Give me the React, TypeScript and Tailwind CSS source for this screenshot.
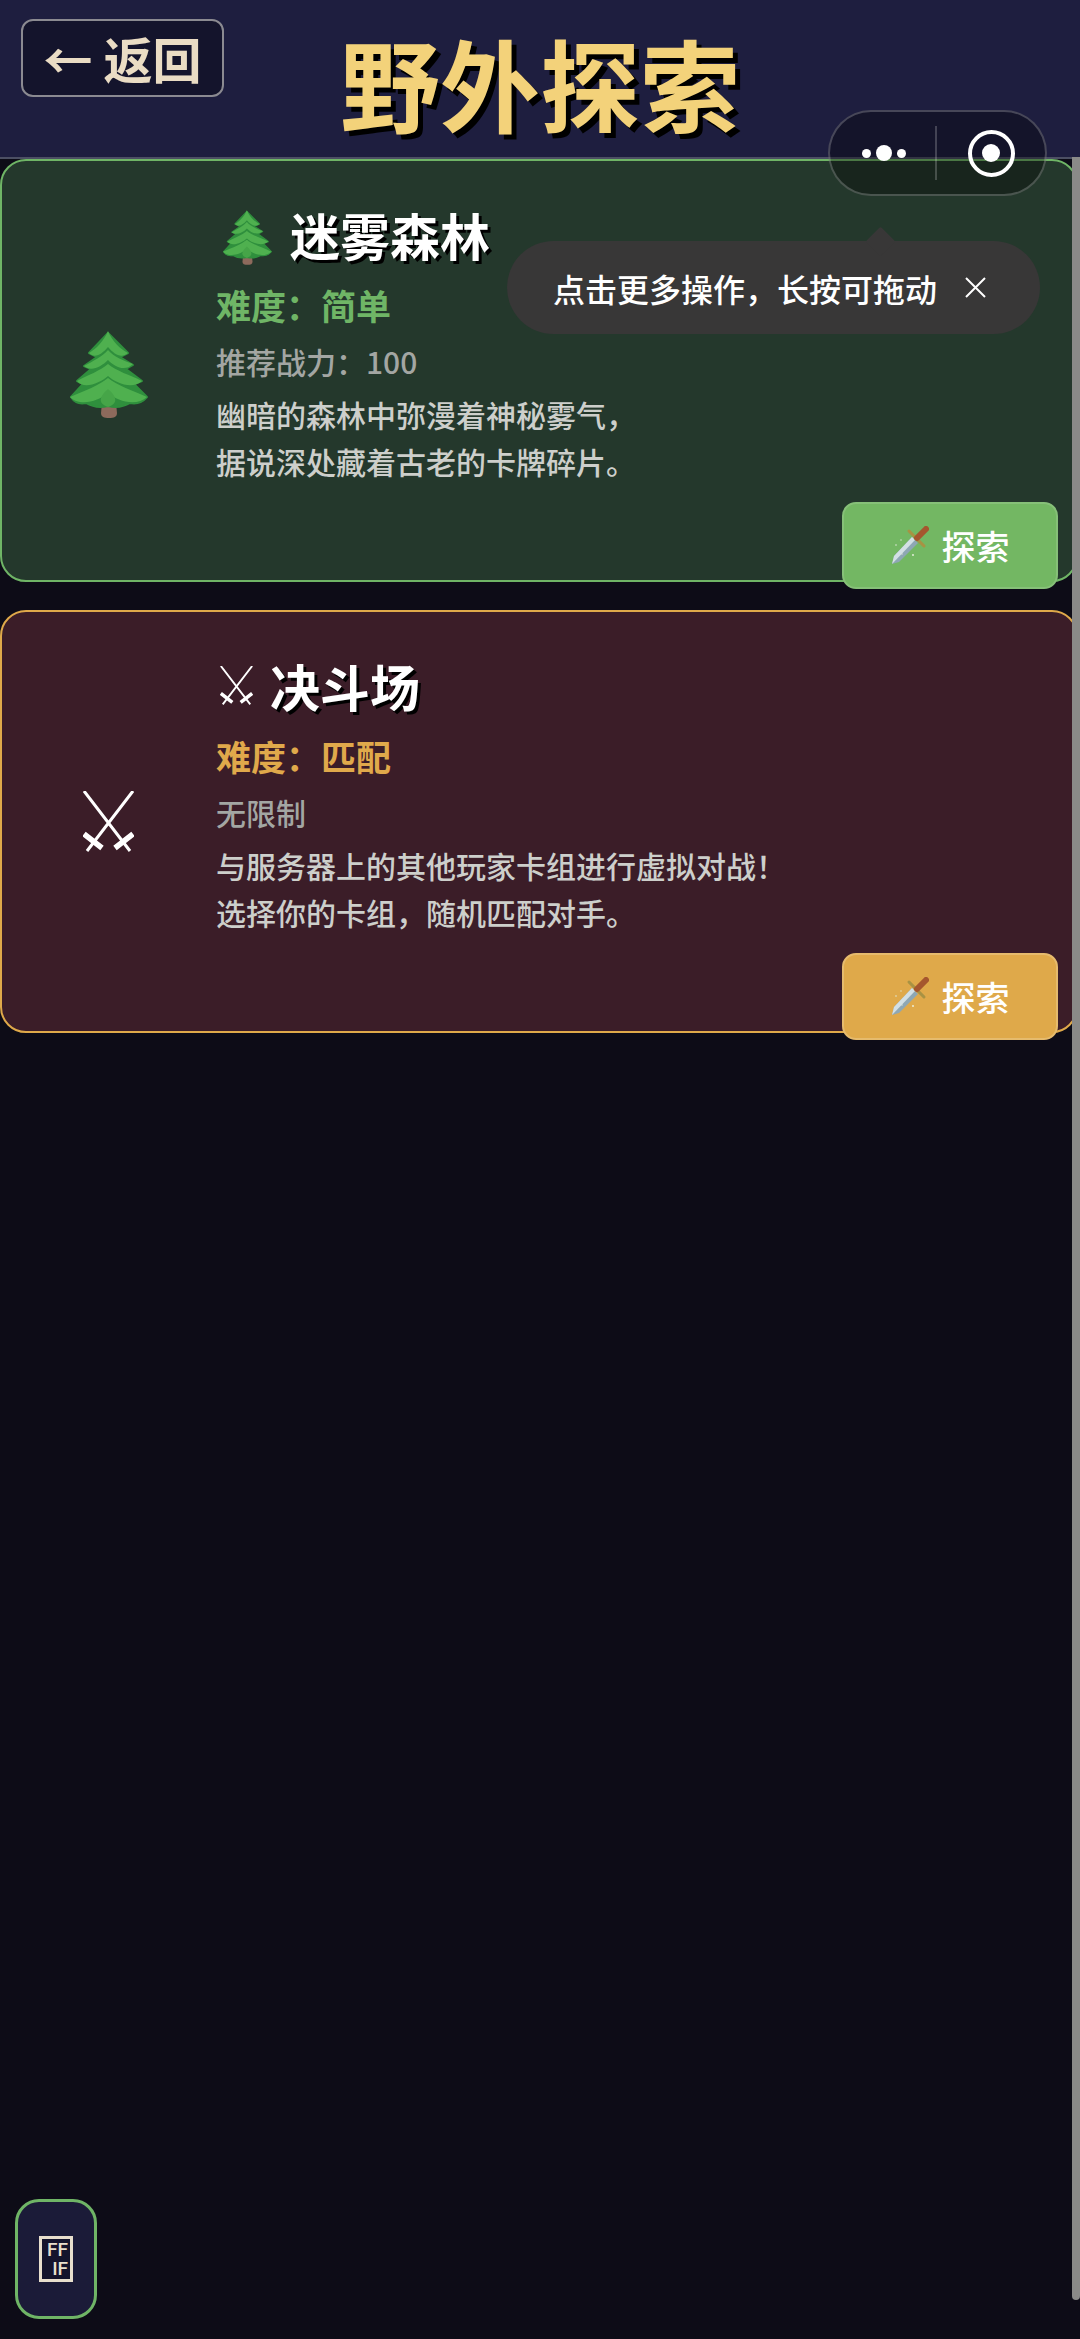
const font = "font-['Noto_Sans_CJK_SC','Noto_Sans',sans-serif]";

function TreeIcon({ width, height }: { width: number; height: number }) {
  return (
    <svg width={width} height={height} viewBox="0 0 78 87" className="shrink-0">
      <path d="M32 72 L46 72 L47 82 C47 86 44 87 39 87 C34 87 31 86 31 82 Z" fill="#8d6a5c" />
      <path
        d="M38 2 L58 22 L50 26 L63 34 L56 38 L72 50 L64 53 L77 66 Q70 74 60 72 Q50 78 38 75 Q26 78 16 72 Q6 74 1 66 L13 53 L7 50 L21 38 L14 35 L27 26 L19 22 Z"
        fill="#2f8f3d"
        stroke="#2f8f3d"
        strokeWidth="2"
        strokeLinejoin="round"
      />
      <path d="M38 0 C42 10 50 18 58 22 C51 28 44 23 38 16 C32 23 25 28 19 22 C26 18 34 10 38 0 Z" fill="#4fb04f" />
      <path d="M38 19 C44 26 54 30 63 33 C55 41 45 36 38 29 C31 36 21 41 14 35 C23 30 32 26 38 19 Z" fill="#4fb04f" />
      <path d="M38 33 C46 40 60 44 72 50 C62 59 46 52 38 45 C30 52 14 59 7 50 C18 44 30 40 38 33 Z" fill="#4fb04f" />
      <path d="M38 47 C46 54 64 60 77 66 C68 75 48 72 38 61 C28 72 8 75 0 66 C14 60 30 54 38 47 Z" fill="#4fb04f" />
      <path d="M38 58 C45 64 50 72 38 76 C26 72 31 64 38 58 Z" fill="#46a548" />
    </svg>
  );
}

function DaggerIcon() {
  return (
    <svg width="38" height="39" viewBox="0 0 38 39" className="shrink-0">
      <path d="M1 38 L3 30 L21 11 L27 17 L8 36 Z" fill="#8ea7b4" />
      <path d="M1 38 L3 30 L21 11 L24 14 Z" fill="#d3e0e5" />
      <path d="M18 5 L33 20" stroke="#a89243" strokeWidth="3" strokeLinecap="round" />
      <path d="M26 12 L35 3" stroke="#a5562e" strokeWidth="6" strokeLinecap="round" />
      <circle cx="5" cy="19" r="0.8" fill="#dfe8d8" />
      <circle cx="10" cy="14" r="0.7" fill="#dfe8d8" />
      <circle cx="22" cy="29" r="0.9" fill="#eef3e4" />
      <circle cx="11" cy="28" r="0.7" fill="#dfe8d8" />
    </svg>
  );
}

function SwordsIcon({ width, height }: { width: number; height: number }) {
  return (
    <svg width={width} height={height} viewBox="0 0 51 61" className="shrink-0" fill="none" stroke="#fff">
      <path d="M1 0 L47 60 M50 0 L4 60" strokeWidth="3" />
      <path d="M32 57 L50 43 M19 57 L1 43" strokeWidth="5.5" />
    </svg>
  );
}

function Card({
  border,
  bg,
  color,
  btn,
  btnBorder,
  bigIcon,
  titleIcon,
  title,
  level,
  power,
  desc,
}: {
  border: string;
  bg: string;
  color: string;
  btn: string;
  btnBorder: string;
  bigIcon: React.ReactNode;
  titleIcon: React.ReactNode;
  title: string;
  level: string;
  power: string;
  desc: string[];
}) {
  return (
    <div className={`relative flex h-[423px] w-[1078px] rounded-[26px] border-2 ${border} ${bg}`}>
      <div className="flex w-[214px] shrink-0 items-center justify-center pr-[1px]">{bigIcon}</div>
      <div className="flex flex-col pt-[43px]">
        <div className="flex h-[60px] items-center">
          {titleIcon}
          <h2 className="text-[50px] leading-[60px] font-bold text-white [text-shadow:3px_3px_0_#000]">{title}</h2>
        </div>
        <p className={`mt-[16px] text-[35px] leading-[50px] font-semibold ${color}`}>难度：{level}</p>
        <p className="mt-[7px] text-[30px] leading-[48px] font-medium text-[#a3a6a3]">{power}</p>
        <div className="mt-[6px] text-[30px] leading-[47px] font-medium text-[#cdcfcb]">
          {desc.map((line) => (
            <p key={line}>{line}</p>
          ))}
        </div>
      </div>
      <button className={`absolute right-[18px] bottom-[-9px] flex h-[87px] w-[216px] items-center justify-center gap-[13px] rounded-[14px] border-2 ${btnBorder} ${btn} text-[34px] font-medium text-white`}>
        <DaggerIcon />
        探索
      </button>
    </div>
  );
}

export default function App() {
  return (
    <div className={`relative h-[2339px] w-[1080px] overflow-hidden bg-[#0d0c17] ${font}`}>
      <header className="grid h-[159px] grid-cols-[1fr_auto_1fr] border-b-2 border-[#4c4f63] bg-[#1e1e3f] pl-[21px]">
        <div>
          <button className="mt-[19px] flex h-[78px] w-[203px] items-center justify-center rounded-[12px] border-2 border-[#8b8a91] bg-[#14142c] text-[49px] font-semibold text-[#eadcc4]">
            ← 返回
          </button>
        </div>
        <h1 className="pr-[21px] pt-[18px] text-[100px] leading-[128px] font-bold text-[#f3d27a] [text-shadow:5px_5px_0_#000]">
          野外探索
        </h1>
      </header>

      <main className="flex flex-col gap-[28px]">
        <Card
          border="border-[#6fb566]"
          bg="bg-[#24382c]"
          color="text-[#6fb566]"
          btn="bg-[#73b763]"
          btnBorder="border-[#86c078]"
          bigIcon={
            <span className="mt-[8px] flex">
              <TreeIcon width={80} height={87} />
            </span>
          }
          titleIcon={
            <span className="mr-[18px] ml-[7px] mt-[6px] flex">
              <TreeIcon width={49} height={55} />
            </span>
          }
          title="迷雾森林"
          level="简单"
          power="推荐战力：100"
          desc={["幽暗的森林中弥漫着神秘雾气，", "据说深处藏着古老的卡牌碎片。"]}
        />
        <Card
          border="border-[#dfa94a]"
          bg="bg-[#3b1d28]"
          color="text-[#e0a94b]"
          btn="bg-[#dfa94a]"
          btnBorder="border-[#e6bb6d]"
          bigIcon={<SwordsIcon width={51} height={61} />}
          titleIcon={
            <span className="mr-[17px] ml-[4px] flex">
              <SwordsIcon width={33} height={39} />
            </span>
          }
          title="决斗场"
          level="匹配"
          power="无限制"
          desc={["与服务器上的其他玩家卡组进行虚拟对战！", "选择你的卡组，随机匹配对手。"]}
        />
      </main>

      {/* scrollbar */}
      <div className="absolute top-[157px] right-0 h-[2143px] w-[8px] rounded-b-[4px] bg-[#8a8a88]" />

      {/* wechat capsule */}
      <div className="absolute top-[110px] left-[828px] flex h-[86px] w-[219px] items-center rounded-full border-2 border-[#ffffff38] bg-[#00000055]">
        <div className="flex w-[105px] items-center justify-center gap-[5px] pl-[3px]">
          <span className="h-[9px] w-[9px] rounded-full bg-white" />
          <span className="h-[16px] w-[16px] rounded-full bg-white" />
          <span className="h-[9px] w-[9px] rounded-full bg-white" />
        </div>
        <div className="h-[54px] w-[2px] bg-[#ffffff33]" />
        <div className="flex flex-1 items-center justify-center">
          <div className="flex h-[47px] w-[47px] items-center justify-center rounded-full border-[4px] border-white">
            <span className="h-[18px] w-[18px] rounded-full bg-white" />
          </div>
        </div>
      </div>

      {/* tooltip */}
      <div className="absolute top-[241px] left-[507px] flex h-[93px] w-[533px] items-center rounded-[47px] bg-[#383737] pl-[46px] text-[32px] font-medium text-white">
        <span className="absolute top-[-10px] left-[363px] h-[21px] w-[21px] rotate-45 rounded-[2px] bg-[#383737]" />
        <span className="relative">点击更多操作，长按可拖动</span>
        <svg width="21" height="21" viewBox="0 0 21 21" className="relative ml-[28px]" stroke="#fff" strokeWidth="2">
          <path d="M1 1 L20 20 M20 1 L1 20" />
        </svg>
      </div>

      {/* bottom-left menu */}
      <button className="absolute top-[2199px] left-[15px] flex h-[120px] w-[82px] items-center justify-center rounded-[24px] border-[3px] border-[#6fb566] bg-[#1b1b38]">
        <div className="flex h-[46px] w-[34px] flex-col items-end justify-center border-[3px] border-[#e8dfcd] bg-[#14142c] pr-[2px] font-['Roboto',sans-serif] text-[19px] leading-[19px] font-medium text-[#e8dfcd]">
          <span>FF</span>
          <span>IF</span>
        </div>
      </button>
    </div>
  );
}
